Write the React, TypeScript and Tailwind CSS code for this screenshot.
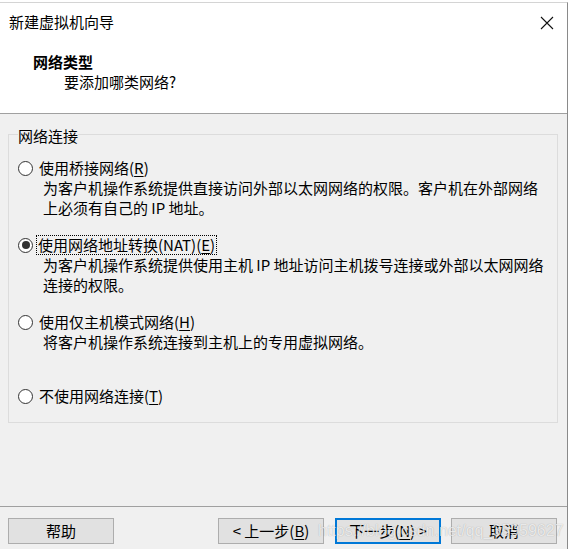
import React from "react";

const FONT = '"Noto Sans CJK SC", "Noto Sans", sans-serif';

function Radio({ checked }: { checked?: boolean }) {
  return (
    <span className="flex h-[15px] w-[15px] shrink-0 items-center justify-center rounded-full border border-[#333333] bg-white">
      {checked && <span className="h-[8px] w-[8px] rounded-full bg-[#333333]" />}
    </span>
  );
}

function Key({ k }: { k: string }) {
  return (
    <>
      (<span className="underline underline-offset-2">{k}</span>)
    </>
  );
}

function WinButton({
  children,
  primary,
}: {
  children: React.ReactNode;
  primary?: boolean;
}) {
  return (
    <button
      className={
        primary
          ? "flex h-[26px] w-[106px] items-center justify-center border-2 border-[#0078d7] bg-[#e1e1e1] text-[15px] leading-[20px] text-black"
          : "flex h-[26px] w-[106px] items-center justify-center border border-[#adadad] bg-[#e1e1e1] text-[15px] leading-[20px] text-black"
      }
    >
      {children}
    </button>
  );
}

export default function App() {
  return (
    <div
      className="flex h-[549px] w-[571px] overflow-hidden bg-white text-black"
      style={{ fontFamily: FONT }}
    >
      <div className="mt-[2px] flex h-[547px] w-[568px] flex-col border-r border-t border-r-[#8a8a8a] border-t-[#d4d4d4]">
        {/* title + header */}
        <div className="border-b border-[#a0a0a0] bg-white pb-[21px]">
          <div className="flex items-center justify-between pt-[9px]">
            <span className="ml-[9px] text-[15px] leading-[20px]">新建虚拟机向导</span>
            <svg
              width="14"
              height="14"
              viewBox="0 0 14 14"
              className="mr-[13px] mt-[2px]"
            >
              <path d="M1 1 L13 13 M13 1 L1 13" stroke="#111" strokeWidth="1.1" fill="none" />
            </svg>
          </div>
          <div className="ml-[33px] mt-[20px] text-[15px] font-bold leading-[20px]">网络类型</div>
          <div className="ml-[64px] text-[15px] leading-[20px]">要添加哪类网络?</div>
        </div>

        {/* body */}
        <div className="flex flex-1 flex-col bg-[#f0f0f0]">
          <fieldset className="ml-[8px] mt-[8px] h-[301px] w-[550px] border border-[#dcdcdc] px-[9px]">
            <legend className="pt-[4px] text-[15px] leading-[20px]">网络连接</legend>

            <div className="mt-[12px] flex h-[20px] items-center">
              <Radio />
              <span className="ml-[6px] text-[15px] leading-[20px]">
                使用桥接网络<Key k="R" />
              </span>
            </div>
            <div className="ml-[25px] text-[15px] leading-[20px]">
              <div>为客户机操作系统提供直接访问外部以太网网络的权限。客户机在外部网络</div>
              <div>上必须有自己的 IP 地址。</div>
            </div>

            <div className="mt-[17px] flex h-[20px] items-center">
              <Radio checked />
              <span className="ml-[3px] border border-dotted border-black px-[1px] text-[15px] leading-[18px]">
                使用网络地址转换(NAT)<Key k="E" />
              </span>
            </div>
            <div className="ml-[25px] text-[15px] leading-[20px]">
              <div>为客户机操作系统提供使用主机 IP 地址访问主机拨号连接或外部以太网网络</div>
              <div>连接的权限。</div>
            </div>

            <div className="mt-[17px] flex h-[20px] items-center">
              <Radio />
              <span className="ml-[6px] text-[15px] leading-[20px]">
                使用仅主机模式网络<Key k="H" />
              </span>
            </div>
            <div className="ml-[25px] text-[15px] leading-[20px]">
              <div>将客户机操作系统连接到主机上的专用虚拟网络。</div>
            </div>

            <div className="mt-[34px] flex h-[20px] items-center">
              <Radio />
              <span className="ml-[6px] text-[15px] leading-[20px]">
                不使用网络连接<Key k="T" />
              </span>
            </div>
          </fieldset>

          <div className="flex-1" />

          {/* footer */}
          <div className="relative flex h-[43px] items-start border-t border-[#a0a0a0] pt-[11px]">
            <div className="ml-[8px]">
              <WinButton>帮助</WinButton>
            </div>
            <div className="flex-1" />
            <div className="mr-[10px] flex gap-[10px]">
              <div className="mr-[1px]">
                <WinButton>
                  &lt; 上一步<Key k="B" />
                </WinButton>
              </div>
              <WinButton primary>
                下一步<Key k="N" /> &gt;
              </WinButton>
              <WinButton>取消</WinButton>
            </div>
            <span
              className="pointer-events-none absolute left-[318px] top-[14px] text-[16px] leading-[20px] text-white/75 [text-shadow:0_0_1px_rgba(0,0,0,0.3)]"
              style={{ fontFamily: '"Liberation Sans", Arial, sans-serif' }}
            >
              https://blog.csdn.net/qq_35959627
            </span>
          </div>
        </div>
      </div>
    </div>
  );
}
